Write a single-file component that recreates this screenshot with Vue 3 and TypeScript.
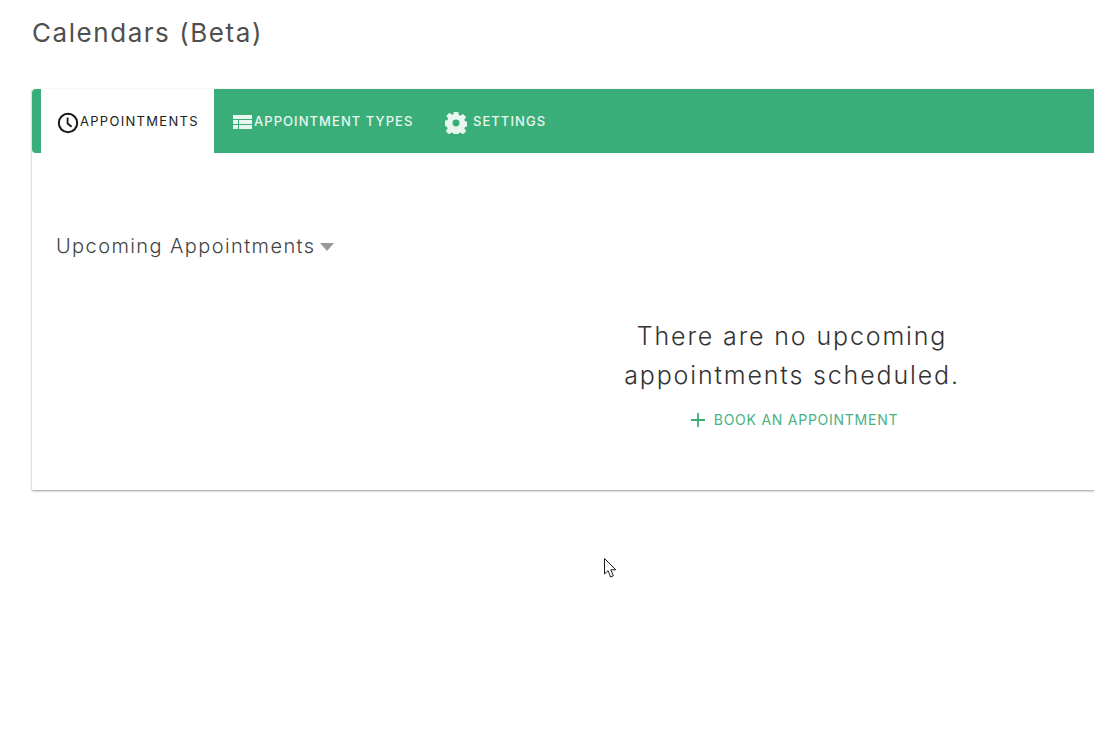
<script setup lang="ts">
const tabs = [
  { label: 'APPOINTMENTS', icon: 'clock', active: true },
  { label: 'APPOINTMENT TYPES', icon: 'list', active: false },
  { label: 'SETTINGS', icon: 'gear', active: false },
]
</script>

<template>
  <div class="page">
    <h1 class="page-title">Calendars (Beta)</h1>
    <section class="calendar-card">
      <nav class="tab-bar">
        <a v-for="tab in tabs" :key="tab.label" class="tab" :class="[`tab--${tab.icon}`, { 'tab--active': tab.active }]">
          <svg v-if="tab.icon === 'clock'" class="tab-icon" width="22" height="22" viewBox="0 0 22 22" fill="none">
            <circle cx="11" cy="11" r="9.2" stroke="#1a1414" stroke-width="2" />
            <path d="M10.600 5.500v6l4 3.200" stroke="#1a1414" stroke-width="1.8" />
          </svg>
          <svg v-else-if="tab.icon === 'list'" class="tab-icon" width="19" height="15" viewBox="0 0 19 15" fill="#e9f6f0">
            <path d="M0 0h19v4H0zM0 5h5v4H0zM6 5h13v4H6zM0 10h5v4H0zM6 10h13v4H6z" />
          </svg>
          <svg v-else class="tab-icon" width="22" height="22" viewBox="0 0 24 24" fill="#e9f6f0">
            <path fill-rule="evenodd" d="M9.500 0h5l.6 3.400 1.700.7 2.900-2 3.400 3.400-2 2.900.7 1.700 3.400.6v5l-3.400.6-.7 1.700 2 2.900-3.400 3.400-2.900-2-1.700.7-.6 3.400h-5l-.6-3.400-1.700-.7-2.900 2-3.400-3.400 2-2.900-.7-1.700L-.7 14.500v-5l3.400-.6.7-1.700-2-2.900 3.400-3.400 2.900 2 1.700-.7zM12 8.200a3.800 3.800 0 1 0 0 7.600 3.800 3.800 0 0 0 0-7.600z" />
          </svg>
          <span>{{ tab.label }}</span>
        </a>
      </nav>
      <div class="card-body">
        <div class="filter">
          <span>Upcoming Appointments</span>
          <i class="filter-caret"></i>
        </div>
        <div class="empty">
          <p class="empty-text">There are no upcoming<br />appointments scheduled.</p>
          <a class="book-link">
            <svg width="16" height="16" viewBox="0 0 16 16" fill="none">
              <path d="M8 1v14M1 8h14" stroke="#3aae78" stroke-width="1.8" />
            </svg>
            <span>BOOK AN APPOINTMENT</span>
          </a>
        </div>
      </div>
    </section>
    <svg class="cursor" width="13" height="21" viewBox="0 0 13 21">
      <path d="M.5.5V16l3.600-3.300 2.500 6.300 2.800-1.200-2.600-6h5z" fill="#fff" stroke="#1c1c1c" stroke-width="1" />
    </svg>
  </div>
</template>

<style scoped>
.page {
  position: relative;
  width: 1094px;
  height: 731px;
  overflow: hidden;
  background: #fff;
  font-family: Inter, "Liberation Sans", sans-serif;
}

.page-title {
  margin: 0;
  padding: 15px 0 0 32px;
  height: 89px;
  box-sizing: border-box;
  font-size: 26px;
  line-height: 36px;
  font-weight: 400;
  letter-spacing: 1.55px;
  color: #4f4f4d;
}

.calendar-card {
  width: 1520px;
  margin-left: 32px;
  background: #fff;
  box-shadow: 0 1px 2px rgba(0, 0, 0, 0.4);
}

.tab-bar {
  display: flex;
  height: 64px;
  padding-left: 9px;
  border-radius: 4px 0 0 4px;
  background: #3aae78;
}

.tab {
  display: flex;
  align-items: center;
  padding: 0 16px;
  gap: 1px;
  font-size: 13px;
  font-weight: 500;
  letter-spacing: 1.05px;
  color: #e9f6f0;
  white-space: nowrap;
}

.tab--active {
  width: 173px;
  box-sizing: border-box;
  background: #fff;
  color: #222;
  font-weight: 400;
  letter-spacing: 1.3px;
}

.tab--list {
  width: 212px;
  box-sizing: border-box;
  padding: 0 0 0 19px;
  gap: 2px;
}

.tab--gear {
  padding: 0 0 0 19px;
  gap: 6px;
}

.tab-icon {
  flex-shrink: 0;
  margin-top: 3px;
}

.card-body {
  height: 337px;
  padding: 79px 24px 0;
  box-sizing: border-box;
}

.filter {
  display: flex;
  align-items: center;
  gap: 5px;
  height: 28px;
  font-size: 20px;
  font-weight: 300;
  letter-spacing: 1.4px;
  color: #444;
}

.filter-caret {
  width: 0;
  height: 0;
  margin-top: 1px;
  border-left: 7.5px solid transparent;
  border-right: 7.5px solid transparent;
  border-top: 8px solid #999;
}

.empty {
  display: flex;
  flex-direction: column;
  align-items: center;
  padding-top: 57px;
}

.empty-text {
  margin: 0;
  text-align: center;
  font-size: 25px;
  line-height: 39px;
  font-weight: 300;
  letter-spacing: 1.85px;
  color: #333;
}

.book-link {
  display: flex;
  align-items: center;
  gap: 8px;
  margin-top: 16px;
  padding-left: 4px;
  font-size: 14px;
  line-height: 18px;
  letter-spacing: 0.75px;
  color: #48b183;
}

.cursor {
  position: absolute;
  left: 604px;
  top: 558px;
}
</style>
